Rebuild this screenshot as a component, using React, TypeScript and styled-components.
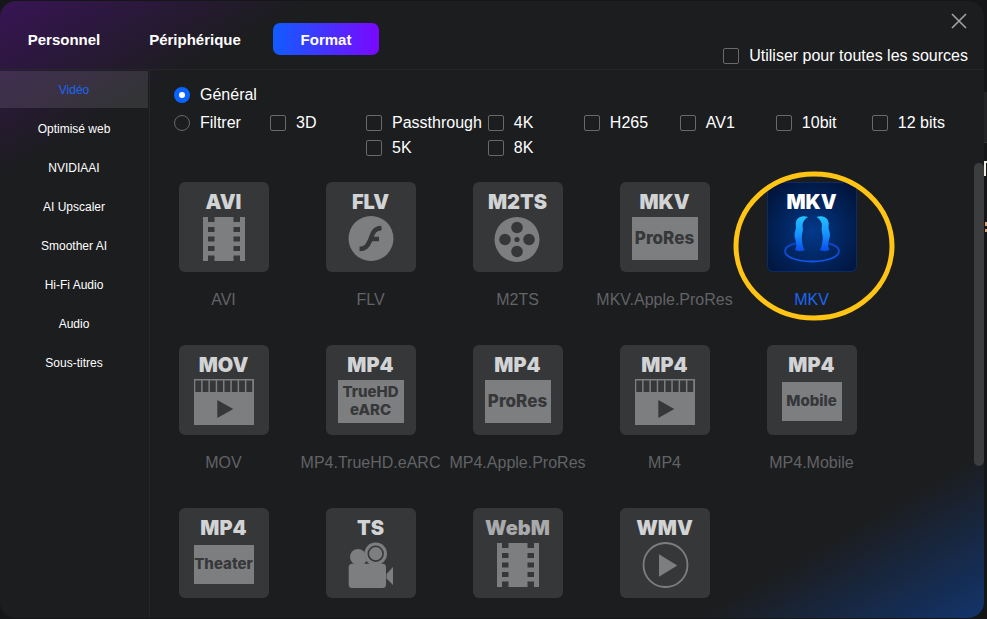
import React, { useState } from "react";
import styled, { createGlobalStyle, css } from "styled-components";

const GlobalStyle = createGlobalStyle`
  * { box-sizing: border-box; }
  body {
    margin: 0;
    background: #151617;
    color: #fff;
    font-family: "Liberation Sans", Arial, sans-serif;
    font-size: 16px;
  }
  button { font-family: inherit; }
`;

const Desktop = styled.div`
  display: grid;
  grid-template-columns: minmax(0, 1fr) 3px;
  height: 100vh;
  padding: 1px 0;
`;

const Dialog = styled.section`
  display: flex;
  flex-direction: column;
  min-height: 0;
  overflow: hidden;
  border-radius: 16px;
  background: linear-gradient(150deg, #381455 0%, #1c1d1f 15%, #1c1d1f 86%, #12346b 100%);
`;

const Behind = styled.aside`
  display: flex;
  flex-direction: column;
  overflow: hidden;
  padding-top: 91px;
`;

const BehindPanel = styled.div`
  height: 51px;
  background: #242425;
  border-bottom: 1px solid #333;
  margin-bottom: 18px;
`;

const BehindBar = styled.div`
  height: 15px;
  border-left: 2px solid #f4efe6;
  border-top: 2px solid #f4efe6;
  margin-bottom: 46px;
`;

const BehindDots = styled.div`
  height: 10px;
  border-top: 4px solid #d9a876;
  border-bottom: 3px solid #d9a876;
  margin-left: 1px;
`;

const Header = styled.header`
  display: flex;
  justify-content: space-between;
  flex: none;
  height: 69px;
  padding-left: 11px;
  border-bottom: 1px solid #252628;
`;

const Tabs = styled.nav`
  display: flex;
  gap: 25px;
  padding-top: 22px;
`;

const Tab = styled.button<{ $active?: boolean }>`
  width: 106px;
  height: 32px;
  padding: 0;
  border: 0;
  border-radius: 7px;
  background: ${(p) => (p.$active ? "linear-gradient(90deg, #115cff, #7a08ff)" : "transparent")};
  color: #fff;
  font-size: 15px;
  font-weight: 700;
`;

const HeaderTools = styled.div`
  display: flex;
  flex-direction: column;
  align-items: flex-end;
  gap: 14px;
  padding: 12px 16px 0 0;
`;

const CloseButton = styled.button`
  display: flex;
  margin-right: 1px;
  padding: 0;
  border: 0;
  background: none;
  color: #a2a2a4;
`;

const Option = styled.label`
  display: flex;
  align-items: center;
  gap: 10px;
  height: 25px;
  line-height: 20px;
  white-space: nowrap;
`;

const Check = styled.input.attrs({ type: "checkbox" })`
  appearance: none;
  flex: none;
  width: 16px;
  height: 16px;
  margin: 0;
  border: 1px solid #68696b;
  border-radius: 2px;
  &:checked { background: #0a62ff; border-color: #0a62ff; }
`;

const Radio = styled.input.attrs({ type: "radio" })`
  appearance: none;
  flex: none;
  width: 16px;
  height: 16px;
  margin: 0;
  border: 1px solid #68696b;
  border-radius: 50%;
  &:checked { border: 5px solid #0a62ff; background: #fff; }
`;

const Body = styled.div`
  display: flex;
  flex: 1;
  min-height: 0;
`;

const Sidebar = styled.nav`
  display: flex;
  flex-direction: column;
  flex: none;
  gap: 2px;
  width: 150px;
  padding: 1px 1px 0 0;
  border-right: 1px solid #252628;
`;

const SideItem = styled.button<{ $active?: boolean }>`
  height: 37px;
  padding: 0;
  border: 0;
  background: ${(p) => (p.$active ? "rgba(255, 255, 255, 0.1)" : "transparent")};
  color: ${(p) => (p.$active ? "#1a66f5" : "#fff")};
  font-size: 12px;
`;

const Content = styled.main`
  display: flex;
  flex-direction: column;
  flex: 1;
  min-width: 0;
`;

const Filters = styled.div`
  display: flex;
  flex-direction: column;
  gap: 3px;
  flex: none;
  padding: 12px 0 3px 24px;
`;

const FilterRow = styled.div`
  display: flex;
`;

const ModeCell = styled.div`
  flex: none;
  width: 96px;
`;

const FilterColumns = styled.div`
  display: flex;
  gap: 6px;
`;

const FilterGroup = styled.div`
  flex: none;
  min-width: 90px;
`;

const Scroller = styled.div`
  display: flex;
  flex: 1;
  min-height: 0;
`;

const FormatGrid = styled.div`
  display: grid;
  flex: 1;
  grid-template-columns: repeat(auto-fill, 147px);
  grid-auto-rows: 163px;
  align-content: start;
  min-width: 0;
  padding-top: 19px;
  overflow-y: auto;
  scrollbar-width: none;
`;

const ScrollThumb = styled.div`
  flex: none;
  width: 10px;
  height: 303px;
  border-radius: 5px;
  background: #3c3d3f;
`;

const Card = styled.button<{ $active?: boolean }>`
  position: relative;
  display: flex;
  flex-direction: column;
  align-items: center;
  gap: 18px;
  padding: 0;
  border: 0;
  background: none;
  color: ${(p) => (p.$active ? "#1a66f5" : "#626365")};
  font-size: 16px;
  line-height: 20px;
  white-space: nowrap;
`;

const Tile = styled.span<{ $active?: boolean }>`
  display: flex;
  flex-direction: column;
  align-items: center;
  width: 90px;
  height: 90px;
  padding-top: 8px;
  border-radius: 6px;
  background: #363739;
  ${(p) =>
    p.$active &&
    css`
      background: radial-gradient(circle at 50% 55%, #033a8c 0%, #02255f 45%, #010f30 100%);
      box-shadow: inset 0 0 0 1px #0c2b60;
    `}
`;

const TileTitle = styled.span<{ $tone: string }>`
  height: 24px;
  color: ${(p) => p.$tone};
  font-family: Inter, sans-serif;
  font-size: 20px;
  font-weight: 900;
  line-height: 24px;
`;

const Art = styled.svg`
  display: block;
  width: 90px;
  height: 58px;
`;

const PlateSlot = styled.span`
  display: flex;
  align-items: center;
  height: 48px;
`;

const Plate = styled.span<{ $wide?: boolean; $size: number }>`
  display: flex;
  flex-direction: column;
  align-items: center;
  justify-content: center;
  width: ${(p) => (p.$wide ? 66 : 60)}px;
  height: ${(p) => (p.$wide ? 43 : 39)}px;
  background: #7d7e80;
  color: #363739;
  font-family: Inter, sans-serif;
  font-size: ${(p) => p.$size}px;
  font-weight: 800;
  line-height: 18px;
`;

const Highlight = styled.svg`
  position: absolute;
  top: -11px;
  left: -6px;
  width: 164px;
  height: 150px;
  pointer-events: none;
`;

const GREY = "#7d7e80";
const DARK = "#363739";

/* Tile artwork shares one coordinate system: x 0-90, y 32-90 of the tile. */
const art = (children: React.ReactNode) => (
  <Art viewBox="0 32 90 58" aria-hidden="true">
    {children}
  </Art>
);

const Film = () =>
  art(
    <>
      <path fill={GREY} d="M24 35h5v5h6.500v-5h19v5H61v-5h5v44h-5v-5.500h-6.500V79h-19v-5.500H29V79h-5z" />
      {[45, 54.5, 64].map((y) => (
        <g key={y} fill={DARK}>
          <rect x="29" y={y} width="6.500" height="5" />
          <rect x="54.500" y={y} width="6.500" height="5" />
        </g>
      ))}
    </>
  );

const Flash = () =>
  art(
    <>
      <circle cx="45" cy="56.500" r="22.500" fill={GREY} />
      <path
        d="M55.500 46C46.500 46.500 46.500 53 44 58.500C41.500 64.500 39 67 33.500 67M44.500 57h8.500"
        fill="none"
        stroke={DARK}
        strokeWidth="4.600"
      />
    </>
  );

const Reel = () =>
  art(
    <>
      <circle cx="44" cy="57.500" r="22.500" fill={GREY} />
      <g fill={DARK}>
        <circle cx="44" cy="45.500" r="5.800" />
        <circle cx="44" cy="69.500" r="5.800" />
        <circle cx="32" cy="57.500" r="5.800" />
        <circle cx="56" cy="57.500" r="5.800" />
        <circle cx="44" cy="57.500" r="2.600" />
      </g>
    </>
  );

const Clapper = () =>
  art(
    <>
      <rect x="15" y="34" width="60" height="46" fill={GREY} />
      {[0, 1, 2, 3, 4, 5, 6, 7].map((i) => (
        <rect key={i} x={16.3 + i * 7.3} y="35.500" width="5.800" height="11.500" fill={DARK} />
      ))}
      <path d="M38.300 55L54.300 64L38.300 73z" fill={DARK} />
    </>
  );

const Camera = () =>
  art(
    <>
      <circle cx="32" cy="49" r="8" fill={GREY} />
      <path d="M35 57L42 47L52 57z" fill={GREY} />
      <path d="M38 56L40.500 53L43.500 56z" fill={DARK} />
      <circle cx="49.700" cy="45.700" r="11.300" fill={GREY} />
      <circle cx="49.700" cy="45.700" r="7.400" fill="none" stroke={DARK} strokeWidth="1.600" />
      <rect x="22.700" y="55.700" width="37.300" height="24.300" rx="3.500" fill={GREY} />
      <path d="M60.500 66L67 59V77L60.500 70.500z" fill={GREY} />
    </>
  );

const Play = () =>
  art(
    <>
      <circle cx="45.500" cy="57" r="22" fill="none" stroke={GREY} strokeWidth="1.800" />
      <path d="M39 46.300L57.300 57.500L39 68.700z" fill={GREY} />
    </>
  );

const Braces = () =>
  art(
    <>
      <defs>
        <linearGradient id="brace" x1="0" y1="34" x2="0" y2="69" gradientUnits="userSpaceOnUse">
          <stop offset="0" stopColor="#22c4ff" />
          <stop offset="0.550" stopColor="#1590ff" />
          <stop offset="1" stopColor="#0a4bea" />
        </linearGradient>
        <linearGradient id="ring" x1="0" y1="58" x2="0" y2="80" gradientUnits="userSpaceOnUse">
          <stop offset="0" stopColor="#0a3fb0" />
          <stop offset="1" stopColor="#1156f0" />
        </linearGradient>
      </defs>
      <path
        d="M30 61C21 63 18 66 18 69C18 75 30 79.500 45 79.500S72 75 72 69C72 66 69 63 60 61"
        fill="none"
        stroke="url(#ring)"
        strokeWidth="1.800"
      />
      <g fill="url(#brace)">
        <path d="M41 35C36 33 30 35 29 40C28.300 43 29.500 45 28.500 48C27 52 27.500 55 28.500 58C29.500 62 30 64 28 68C31 69.500 35 69.500 38 68C36 66 36 64 35.500 62C35 59 34.500 57 35 53C35.300 50 36.500 48 35.700 45C35 41 37 37.500 41 35z" />
        <path d="M49.500 35C54.500 33 60.500 35 61.500 40C62.200 43 61 45 62 48C63.500 52 63 55 62 58C61 62 60.500 64 62.500 68C59.500 69.500 55.500 69.500 52.500 68C54.500 66 54.500 64 55 62C55.500 59 56 57 55.500 53C55.200 50 54 48 54.800 45C55.500 41 53.500 37.500 49.500 35z" />
      </g>
    </>
  );

const plate = (lines: string[], size: number, wide?: boolean) => (
  <PlateSlot>
    <Plate $size={size} $wide={wide}>
      {lines.map((l) => (
        <span key={l}>{l}</span>
      ))}
    </Plate>
  </PlateSlot>
);

type Format = { title: string; label?: string; name: string; art: React.ReactNode; tone?: string };

const formats: Format[] = [
  { name: "AVI", title: "AVI", label: "AVI", art: <Film /> },
  { name: "FLV", title: "FLV", label: "FLV", art: <Flash /> },
  { name: "M2TS", title: "M2TS", label: "M2TS", art: <Reel /> },
  { name: "MKV.Apple.ProRes", title: "MKV", label: "MKV.Apple.ProRes", art: plate(["ProRes"], 17, true) },
  { name: "MKV", title: "MKV", label: "MKV", art: <Braces /> },
  { name: "MOV", title: "MOV", label: "MOV", art: <Clapper /> },
  { name: "MP4.TrueHD.eARC", title: "MP4", label: "MP4.TrueHD.eARC", art: plate(["TrueHD", "eARC"], 15, true) },
  { name: "MP4.Apple.ProRes", title: "MP4", label: "MP4.Apple.ProRes", art: plate(["ProRes"], 17, true) },
  { name: "MP4", title: "MP4", label: "MP4", art: <Clapper /> },
  { name: "MP4.Mobile", title: "MP4", label: "MP4.Mobile", art: plate(["Mobile"], 15) },
  { name: "MP4.Theater", title: "MP4", art: plate(["Theater"], 15) },
  { name: "TS", title: "TS", art: <Camera /> },
  { name: "WebM", title: "WebM", art: <Film />, tone: "#a9aaac" },
  { name: "WMV", title: "WMV", art: <Play /> },
];

const filterColumns = [["3D"], ["Passthrough", "5K"], ["4K", "8K"], ["H265"], ["AV1"], ["10bit"], ["12 bits"]];
const categories = ["Vidéo", "Optimisé web", "NVIDIAAI", "AI Upscaler", "Smoother AI", "Hi-Fi Audio", "Audio", "Sous-titres"];
const tabs = ["Personnel", "Périphérique", "Format"];

export default function App() {
  const [tab, setTab] = useState("Format");
  const [category, setCategory] = useState("Vidéo");
  const [selected, setSelected] = useState("MKV");

  return (
    <>
      <GlobalStyle />
      <Desktop>
        <Dialog>
          <Header>
            <Tabs>
              {tabs.map((t) => (
                <Tab key={t} $active={t === tab} onClick={() => setTab(t)}>
                  {t}
                </Tab>
              ))}
            </Tabs>
            <HeaderTools>
              <CloseButton aria-label="Fermer">
                <svg width="16" height="16" viewBox="0 0 16 16">
                  <path d="M1 1L15 15M15 1L1 15" stroke="currentColor" strokeWidth="1.600" />
                </svg>
              </CloseButton>
              <Option>
                <Check />
                Utiliser pour toutes les sources
              </Option>
            </HeaderTools>
          </Header>
          <Body>
            <Sidebar>
              {categories.map((c) => (
                <SideItem key={c} $active={c === category} onClick={() => setCategory(c)}>
                  {c}
                </SideItem>
              ))}
            </Sidebar>
            <Content>
              <Filters>
                <Option>
                  <Radio name="mode" defaultChecked />
                  Général
                </Option>
                <FilterRow>
                  <ModeCell>
                    <Option>
                      <Radio name="mode" />
                      Filtrer
                    </Option>
                  </ModeCell>
                  <FilterColumns>
                    {filterColumns.map((column) => (
                      <FilterGroup key={column[0]}>
                        {column.map((f) => (
                          <Option key={f}>
                            <Check />
                            {f}
                          </Option>
                        ))}
                      </FilterGroup>
                    ))}
                  </FilterColumns>
                </FilterRow>
              </Filters>
              <Scroller>
                <FormatGrid>
                  {formats.map((f) => {
                    const active = f.name === selected;
                    return (
                      <Card key={f.name} aria-label={f.name} $active={active} onClick={() => setSelected(f.name)}>
                        <Tile $active={f.name === "MKV"}>
                          <TileTitle $tone={f.name === "MKV" ? "#fff" : f.tone ?? "#d2d3d4"}>{f.title}</TileTitle>
                          {f.art}
                        </Tile>
                        {f.label && <span>{f.label}</span>}
                        {active && (
                          <Highlight viewBox="0 0 164 150" aria-hidden="true">
                            <ellipse cx="82" cy="75" rx="78" ry="72" fill="none" stroke="#ffc414" strokeWidth="5" />
                          </Highlight>
                        )}
                      </Card>
                    );
                  })}
                </FormatGrid>
                <ScrollThumb />
              </Scroller>
            </Content>
          </Body>
        </Dialog>
        <Behind aria-hidden="true">
          <BehindPanel />
          <BehindBar />
          <BehindDots />
        </Behind>
      </Desktop>
    </>
  );
}
